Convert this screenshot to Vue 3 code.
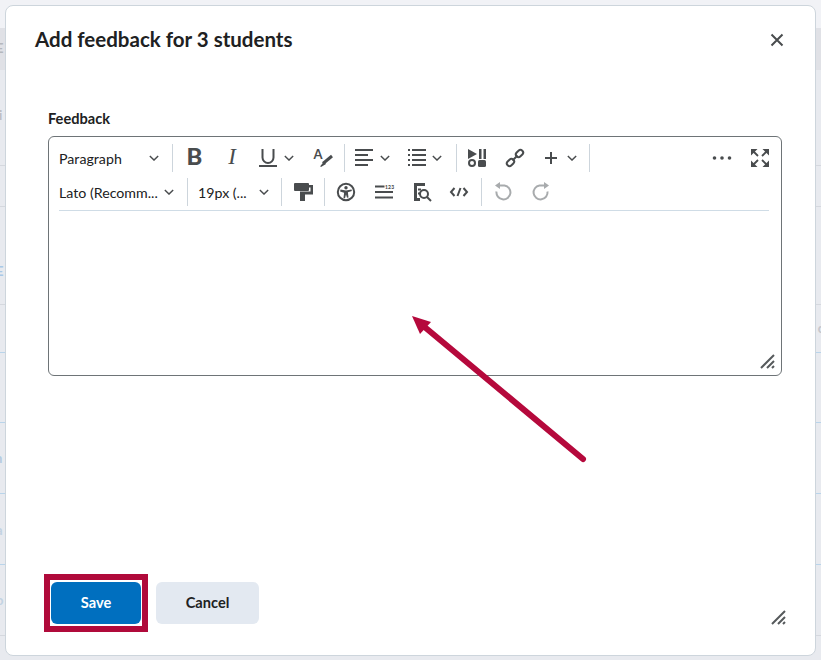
<script setup>
const bgLeft = [
  { y: 165, c: 'grey' }, { y: 206, c: 'grey' }, { y: 304, c: 'grey' },
  { y: 352, c: 'blue' }, { y: 422, c: 'blue' }, { y: 493, c: 'blue' }, { y: 564, c: 'blue' }, { y: 635, c: 'grey' }
]
</script>

<template>
  <div class="page">
    <div class="backdrop" aria-hidden="true">
      <i class="band"></i>
      <i v-for="l in bgLeft" :key="l.y" class="rule" :class="l.c" :style="{ top: l.y + 'px' }"></i>
      <span class="ghost g1">E</span>
      <span class="ghost g2">i</span>
      <span class="ghost g3">E</span>
      <span class="ghost g4">n</span>
      <span class="ghost g5">a</span>
      <span class="ghost g6">o</span>
      <span class="ghost g7">c</span>
    </div>

    <section class="dialog">
      <header class="head">
        <h1>Add feedback for 3 students</h1>
        <svg class="close" viewBox="0 0 14 14"><path d="M1.5 1.5l11 11M12.5 1.5l-11 11" /></svg>
      </header>

      <div class="body">
        <label class="label">Feedback</label>
        <div class="editor">
          <div class="row">
            <div class="sel s-para"><span>Paragraph</span><svg class="chev" viewBox="0 0 12 7"><path d="M1 1l5 5 5-5" /></svg></div>
            <i class="sep"></i>
            <div class="cell w38"><span class="g-b">B</span></div>
            <div class="cell w38"><span class="g-i">I</span></div>
            <div class="split u-split">
              <svg class="ic" viewBox="0 0 20 20"><path class="st" d="M4.5 1v8.5a5.5 5.5 0 0 0 11 0V1" /><path class="st" d="M1 18h18" /></svg>
              <svg class="chev" viewBox="0 0 12 7"><path d="M1 1l5 5 5-5" /></svg>
            </div>
            <div class="cell w40 pr4">
              <svg class="ic" viewBox="0 0 20 20"><text x="1.500" y="10.500" class="a-text">A</text><path class="st brush" d="M20 8l-9 7.500" /><path class="fl" d="M12 13.500l2 2.500-5 3-.8-.8z" /></svg>
            </div>
            <i class="sep"></i>
            <div class="split a-split">
              <svg class="ic" viewBox="0 0 20 20"><path class="st" d="M1 2h18M1 7h13M1 12h18M1 17h13" /></svg>
              <svg class="chev" viewBox="0 0 12 7"><path d="M1 1l5 5 5-5" /></svg>
            </div>
            <div class="split l-split">
              <svg class="ic" viewBox="0 0 20 20"><path class="st" d="M5 2h14M5 7h14M5 12h14M5 17h14" /><path class="st" d="M1 2h2M1 7h2M1 12h2M1 17h2" /></svg>
              <svg class="chev" viewBox="0 0 12 7"><path d="M1 1l5 5 5-5" /></svg>
            </div>
            <i class="sep"></i>
            <div class="cell w36">
              <svg class="ic" viewBox="0 0 20 20"><path class="fl" d="M1 1l9 5-9 5z" /><path class="fl" d="M12 1h2.5v10H12zM16.500 1H19v10h-2.500z" /><circle class="st" cx="5" cy="15" r="3" /><rect class="fl" x="11" y="12" width="8" height="7" rx="1.500" /></svg>
            </div>
            <div class="cell w40">
              <svg class="ic" viewBox="0 0 20 20"><g class="st"><rect x="10.500" y="2.800" width="8" height="5.400" rx="2.700" transform="rotate(-45 14.500 5.500)" /><rect x="1.500" y="11.800" width="8" height="5.400" rx="2.700" transform="rotate(-45 5.500 14.500)" /><path d="M7.500 12.500l5-5" /></g></svg>
            </div>
            <div class="split p-split">
              <svg class="ic" viewBox="0 0 20 20"><path class="st" d="M10 4v12M4 10h12" /></svg>
              <svg class="chev" viewBox="0 0 12 7"><path d="M1 1l5 5 5-5" /></svg>
            </div>
            <i class="sep"></i>
            <div class="right">
              <div class="cell w38"><svg class="ic" viewBox="0 0 20 20"><circle class="fl" cx="2.500" cy="10" r="1.800" /><circle class="fl" cx="10" cy="10" r="1.800" /><circle class="fl" cx="17.500" cy="10" r="1.800" /></svg></div>
              <div class="cell w38"><svg class="ic" viewBox="0 0 20 20"><path class="fl" d="M1 1h6.500L1 7.500zM19 1h-6.500L19 7.500zM1 19h6.500L1 12.500zM19 19h-6.500l6.500-6.500z" /><path class="st tail" d="M3 3l5 5M17 3l-5 5M3 17l5-5M17 17l-5-5" /></svg></div>
            </div>
          </div>

          <div class="row">
            <div class="sel s-font"><span>Lato (Recomm...</span><svg class="chev" viewBox="0 0 12 7"><path d="M1 1l5 5 5-5" /></svg></div>
            <i class="sep"></i>
            <div class="sel s-size"><span>19px (...</span><svg class="chev" viewBox="0 0 12 7"><path d="M1 1l5 5 5-5" /></svg></div>
            <i class="sep"></i>
            <div class="cell w40 pr2">
              <svg class="ic" viewBox="0 0 20 20"><path class="fl" d="M1 2a1 1 0 0 1 1-1h13a1 1 0 0 1 1 1v1h4v9.500h-8V19H7v-9.500h10.500V5.500H16V8a1 1 0 0 1-1 1H2a1 1 0 0 1-1-1z" /></svg>
            </div>
            <i class="sep"></i>
            <div class="cell w38">
              <svg class="ic" viewBox="0 0 20 20"><circle class="st" cx="10" cy="10" r="8.200" /><circle class="fl" cx="10" cy="5.800" r="1.700" /><path class="fl" d="M4.500 7.500l5.500 1 5.500-1 .4 1.500-4 1.200.6 5.300-1.500.3L10 12.500 9 16.300l-1.500-.3.600-5.300-4-1.200z" /></svg>
            </div>
            <div class="cell w38">
              <svg class="ic" viewBox="0 0 20 20"><path class="st" d="M1 4.500h9.500M1 10h18M1 15.500h18" /><text x="11" y="6.500" class="n-text">123</text></svg>
            </div>
            <div class="cell w37">
              <svg class="ic" viewBox="0 0 20 20"><path class="fl" d="M2 1h11v3H5v12h3v3H2z" /><path class="st" d="M6 7.500h3M6 11.500h2" /><circle class="st" cx="12" cy="12" r="4" /><path class="st" d="M15 15l4 4" /></svg>
            </div>
            <div class="cell w41 pr3">
              <svg class="ic" viewBox="0 0 20 20"><path class="st" d="M5.500 6L2 10l3.500 4M14.500 6L18 10l-3.500 4M11.500 6l-3 8" /></svg>
            </div>
            <i class="sep"></i>
            <div class="cell w38">
              <svg class="ic off" viewBox="0 0 20 20"><path class="st" d="M6 3.500h5.500a7 7 0 1 1-8 6" /><path class="fl" d="M7 0v7L2 3.500z" /></svg>
            </div>
            <div class="cell w38">
              <svg class="ic off" viewBox="0 0 20 20"><path class="st" d="M14 3.500H8.500a7 7 0 1 0 8 6" /><path class="fl" d="M13 0v7l5-3.500z" /></svg>
            </div>
          </div>

          <div class="rule-in"></div>
          <svg class="grip grip-ed" viewBox="0 0 16 16"><path d="M1 14L14 1M7 14l7-7M12 14l2-2" /></svg>
        </div>
      </div>

      <footer class="foot">
        <div class="mark"><button class="btn primary">Save</button></div>
        <button class="btn">Cancel</button>
      </footer>
      <svg class="grip grip-dlg" viewBox="0 0 16 16"><path d="M1 14L14 1M7 14l7-7M12 14l2-2" /></svg>
    </section>

    <svg class="arrow" viewBox="0 0 821 660" aria-hidden="true">
      <path d="M583 459L421 324" />
      <polygon points="412,316 431,322 420,334" />
    </svg>
  </div>
</template>

<style>
html, body { margin: 0; background: #eceef2; }
</style>

<style scoped>
.page {
  position: relative;
  width: 821px;
  height: 660px;
  overflow: hidden;
  box-sizing: border-box;
  padding: 5px 5px 4px;
  display: flex;
  font-family: Lato, "Open Sans", sans-serif;
  color: #202122;
  background: linear-gradient(#f1f2f6 0, #f1f2f6 28px, #e8eaef 28px);
}
.backdrop { position: absolute; inset: 0; }
.band { position: absolute; left: 0; right: 0; top: 28px; height: 42px; background: #e0e1e6; }
.rule { position: absolute; left: 0; right: 0; height: 1px; }
.rule.grey { background: #d5d8de; }
.rule.blue { background: #b9d4ea; }
.ghost { position: absolute; font-size: 13px; font-weight: 700; line-height: 1; }
.g1 { left: -4px; top: 42px; color: #b5b7bc; }
.g2 { left: -1px; top: 109px; color: #bcbec3; }
.g3 { left: -4px; top: 265px; color: #a9c8e6; }
.g4 { left: -5px; top: 452px; color: #b4cbe0; }
.g5 { left: -4px; top: 524px; color: #c3d3e2; }
.g6 { left: -4px; top: 594px; color: #c3d3e2; }
.g7 { right: -3px; top: 322px; color: #c4c6cb; }

.dialog {
  position: relative;
  flex: 1;
  display: flex;
  flex-direction: column;
  box-sizing: border-box;
  background: #fff;
  border: 1px solid #cdd5dc;
  border-radius: 8px;
}
.head {
  height: 66px;
  flex: none;
  display: flex;
  align-items: center;
  justify-content: space-between;
  padding: 0 31px 0 29px;
}
h1 { margin: 0; font-size: 20.5px; font-weight: 700; line-height: 26px; }
.close { width: 14px; height: 14px; margin-top: 2px; fill: none; stroke: #494c4e; stroke-width: 2; }

.body { flex: 1; padding: 37px 33px 0 42px; }
.label { display: block; font-size: 14.6px; font-weight: 700; line-height: 20px; margin-bottom: 7px; }
.editor {
  position: relative;
  box-sizing: border-box;
  height: 240px;
  padding-top: 4px;
  border: 1px solid #6e7477;
  border-radius: 6px;
}
.row { height: 34px; display: flex; align-items: center; padding-left: 10px; padding-right: 2px; color: #494c4e; }
.sep { flex: none; width: 1px; height: 28px; margin-right: 2px; background: #cdd5dc; }
.cell, .split { flex: none; height: 34px; display: flex; align-items: center; box-sizing: border-box; }
.cell { justify-content: center; }
.w36 { width: 36px; } .w37 { width: 37px; } .w38 { width: 38px; } .w40 { width: 40px; } .w41 { width: 41px; }
.pr2 { padding-right: 2px; } .pr3 { padding-right: 3px; } .pr4 { padding-right: 4px; }
.split { gap: 5px; }
.u-split { width: 53px; padding-left: 7px; }
.a-split { width: 50px; padding-left: 7px; }
.l-split { width: 59px; padding-left: 10px; gap: 4px; }
.p-split { width: 54px; padding-left: 6px; }
.right { margin-left: auto; display: flex; }

.sel {
  flex: none;
  height: 34px;
  box-sizing: border-box;
  display: flex;
  align-items: center;
  justify-content: space-between;
  font-size: 14.2px;
  color: #202122;
}
.sel span { padding-top: 1px; }
.s-para { width: 113px; padding-right: 12px; }
.s-font { width: 128px; padding-right: 12px; }
.s-size { width: 91px; padding: 0 11px 0 8px; }

.ic { width: 20px; height: 20px; flex: none; overflow: visible; }
.st { fill: none; stroke: #494c4e; stroke-width: 2; }
.brush { stroke-width: 3; }
.tail { stroke-width: 1.8; }
.fl { fill: #494c4e; }
.off .st { stroke: #a8abad; }
.off .fl { fill: #a8abad; }
.chev { width: 10px; height: 6px; margin: 0 1px; flex: none; fill: none; stroke: #494c4e; stroke-width: 1.7; }
.g-b { font-size: 22px; font-weight: 900; line-height: 1; color: #494c4e; transform: scaleX(1.08); padding-bottom: 3px; }
.g-i { font-family: "Liberation Serif", serif; font-style: italic; font-size: 23px; line-height: 1; color: #494c4e; padding-bottom: 3px; }
.a-text { font-size: 13px; font-weight: 700; fill: #494c4e; }
.n-text { font-size: 5px; font-weight: 900; fill: #494c4e; letter-spacing: .2px; }

.rule-in { height: 1px; margin: 1px 12px 0 10px; background: #cfdce6; }
.grip { position: absolute; width: 16px; height: 16px; fill: none; stroke: #565a5c; stroke-width: 2; }
.grip-ed { right: 5px; bottom: 5px; }
.grip-dlg { right: 28px; bottom: 29px; }

.foot { flex: none; display: flex; align-items: center; gap: 8px; padding: 0 0 23px 38px; }
.mark { padding: 2px 1px; border: 6px solid #b00a3b; display: flex; }
.btn {
  width: 103px;
  height: 42px;
  padding: 0 0 2px;
  border: 0;
  border-radius: 6px;
  font-family: inherit;
  font-size: 14.6px;
  font-weight: 700;
  color: #202122;
  background: #e3e9f1;
}
.btn.primary { width: 90px; color: #fff; background: #006fbf; }

.arrow { position: absolute; inset: 0; width: 821px; height: 660px; pointer-events: none; }
.arrow path { fill: none; stroke: #b5093c; stroke-width: 6; stroke-linecap: round; }
.arrow polygon { fill: #b5093c; }
</style>
